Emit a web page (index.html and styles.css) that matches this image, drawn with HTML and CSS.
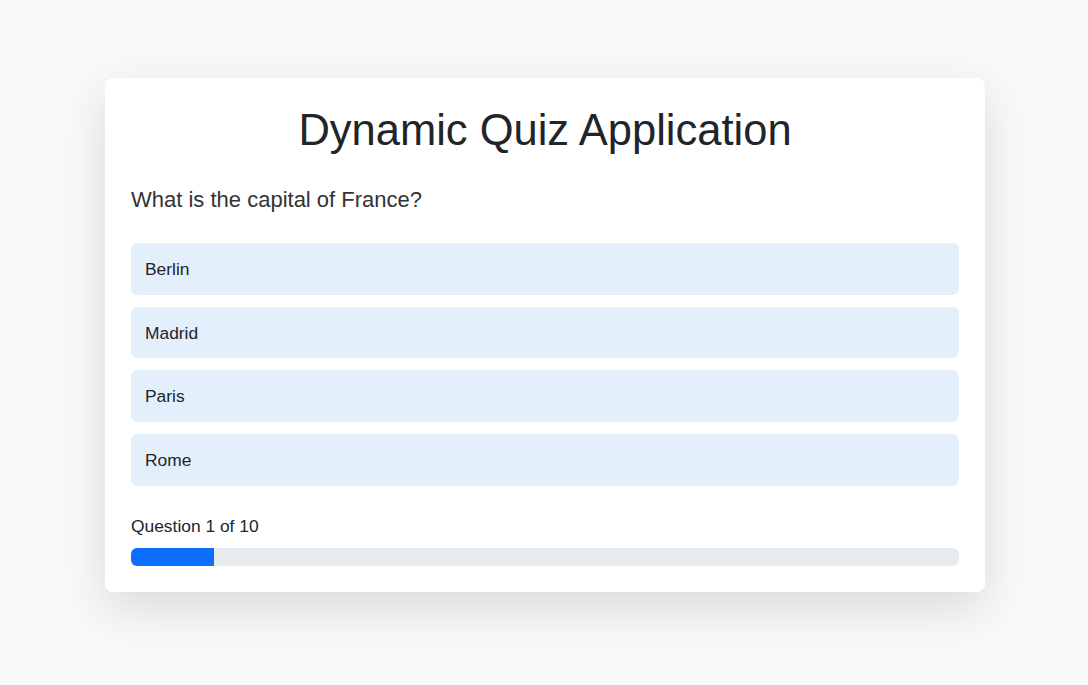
FILE: index.html
```html
<!DOCTYPE html>
<html lang="en">
<head>
<meta charset="utf-8">
<title>Dynamic Quiz Application</title>
<link rel="stylesheet" href="styles.css">
</head>
<body>
<main class="page">
  <section class="quiz-card">
    <h1 class="quiz-title">Dynamic Quiz Application</h1>
    <p class="question">What is the capital of France?</p>
    <div class="options">
      <button class="option">Berlin</button>
      <button class="option">Madrid</button>
      <button class="option">Paris</button>
      <button class="option">Rome</button>
    </div>
    <div class="progress-label">Question 1 of 10</div>
    <div class="progress">
      <div class="progress-bar" style="width: 10%"></div>
    </div>
  </section>
</main>
</body>
</html>
```
FILE: styles.css
```css
* { box-sizing: border-box; }

html, body {
  margin: 0;
  padding: 0;
}

body {
  background: #f8f9fa;
  font-family: "Liberation Sans", Arial, sans-serif;
  color: #212529;
  min-height: 685px;
}

.page {
  display: flex;
  justify-content: center;
  padding: 78px 0 0 2px;
}

.quiz-card {
  width: 880px;
  background: #ffffff;
  border-radius: 8px;
  padding: 26px 26px 26px;
  box-shadow: 0 16px 48px rgba(0, 0, 0, 0.13);
}

.quiz-title {
  margin: 0;
  font-size: 43.5px;
  line-height: 52px;
  font-weight: 400;
  text-align: center;
  color: #212529;
}

.question {
  margin: 30px 0 0;
  font-size: 22px;
  line-height: 27px;
  color: #333333;
}

.options {
  margin-top: 30px;
  display: flex;
  flex-direction: column;
  gap: 12px;
}

.option {
  display: block;
  width: 100%;
  height: 51.7px;
  padding: 0 14px;
  border: none;
  border-radius: 6px;
  background: #e3f0fc;
  font-family: inherit;
  font-size: 17.4px;
  line-height: 24px;
  color: #212529;
  text-align: left;
  cursor: pointer;
}

.progress-label {
  margin-top: 28px;
  font-size: 17.4px;
  line-height: 24px;
  color: #212529;
}

.progress {
  margin-top: 10px;
  height: 18px;
  background: #e9ecef;
  border-radius: 6px;
  overflow: hidden;
}

.progress-bar {
  height: 100%;
  background: #0d6efd;
}
```
